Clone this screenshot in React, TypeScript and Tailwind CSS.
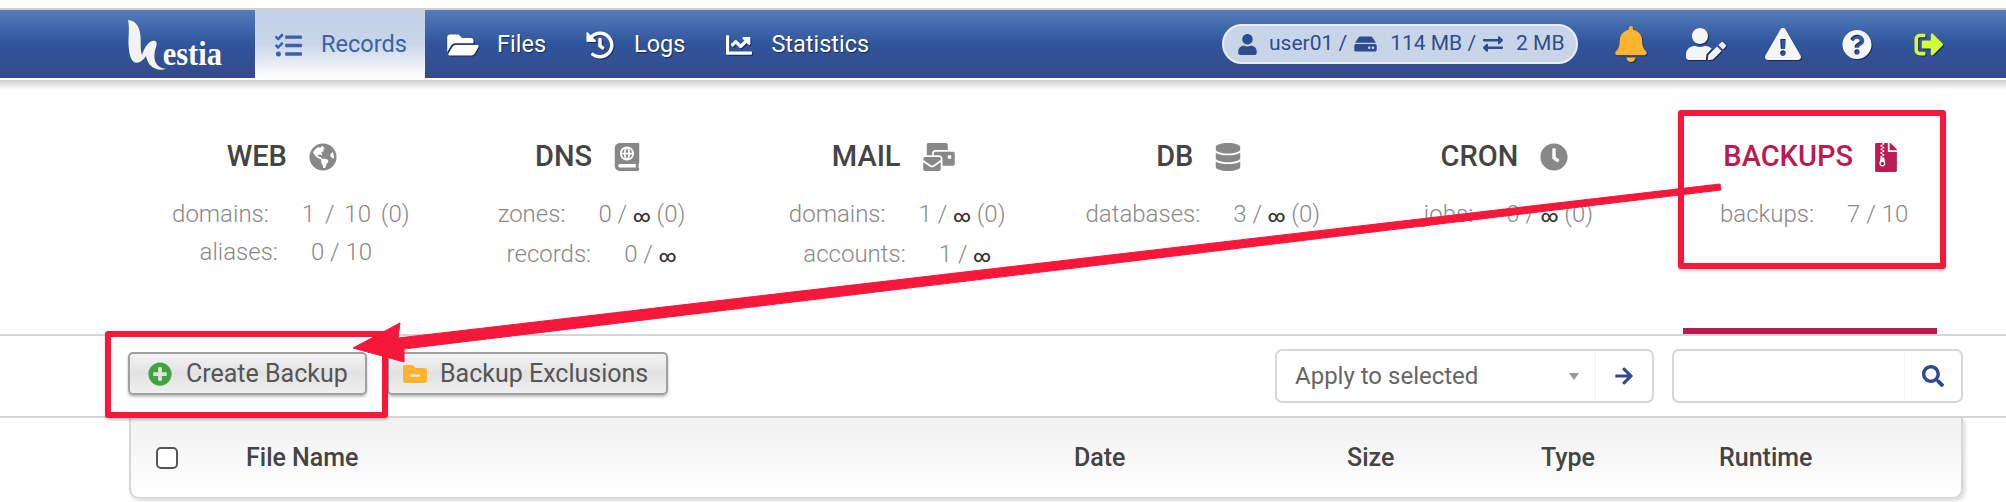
import React from "react";
import {
  FaTasks, FaFolderOpen, FaHistory, FaChartLine, FaUser, FaHdd, FaExchangeAlt, FaBell, FaUserEdit,
  FaExclamationTriangle, FaQuestionCircle, FaSignOutAlt, FaGlobeAmericas, FaAtlas, FaMailBulk,
  FaDatabase, FaClock, FaFileArchive, FaPlusCircle, FaFolderMinus, FaArrowRight, FaSearch,
} from "react-icons/fa";

const Inf = () => <span className="text-[#333] text-[17px] font-medium">∞</span>;

type Row = { label: string; value: React.ReactNode; cls?: string };
const stats: { title: string; icon: React.ReactNode; rows: Row[]; active?: boolean }[] = [
  { title: "WEB", icon: <FaGlobeAmericas className="w-[28px] h-[28px]" />, rows: [
    { label: "domains:", value: <span className="[word-spacing:4px]">1 / 10 (0)</span>, cls: "pl-[18px]" }, { label: "aliases:", value: "0 / 10", cls: "pl-[8px]" } ] },
  { title: "DNS", icon: <FaAtlas className="w-[26px] h-[28px]" />, rows: [
    { label: "zones:", value: <>0 / <Inf /> (0)</>, cls: "pl-[8px]" }, { label: "records:", value: <>0 / <Inf /></>, cls: "pl-[8px]" } ] },
  { title: "MAIL", icon: <FaMailBulk className="w-[32px] h-[28px]" />, rows: [
    { label: "domains:", value: <>1 / <Inf /> (0)</>, cls: "pl-[8px]" }, { label: "accounts:", value: <>1 / <Inf /></>, cls: "pl-[8px]" } ] },
  { title: "DB", icon: <FaDatabase className="w-[26px] h-[28px]" />, rows: [
    { label: "databases:", value: <>3 / <Inf /> (0)</>, cls: "pl-[8px]" } ] },
  { title: "CRON", icon: <FaClock className="w-[28px] h-[28px]" />, rows: [
    { label: "jobs:", value: <>0 / <Inf /> (0)</>, cls: "pl-[8px]" } ] },
  { title: "BACKUPS", icon: <FaFileArchive className="w-[22px] h-[29px]" />, rows: [
    { label: "backups:", value: "7 / 10", cls: "pl-[8px]" } ], active: true },
];

const navIcon = "drop-shadow-[1px_1px_0_rgba(20,30,70,0.8)]";

export default function App() {
  return (
    <div className="relative h-[502px] w-[2006px] overflow-hidden bg-white font-['Roboto',sans-serif]">
      {/* top strip */}
      <div className="h-[8px] bg-white" />
      <div className="h-[2px] bg-[#d0d0d0]" />

      {/* header */}
      <header className="flex h-[68px] items-stretch bg-gradient-to-b from-[#557cb9] via-[#2f559c] to-[#354b8a] pl-[120px] text-[23.5px] text-white">
        <div className="flex w-[135px] items-start">
          <svg width="110" height="68" viewBox="0 0 330 204">
            <path d="M24 30 C50 32 62 55 62 90 C62 110 62 125 66 135 C72 115 85 92 102 92 C110 92 112 100 108 112 C102 130 100 150 112 165 C118 172 128 176 138 176 C125 182 105 180 90 165 C84 158 80 148 78 138 C70 150 62 158 50 158 C36 158 28 140 26 110 C24 80 30 55 24 30 Z" fill="#f2f2f2" />
            <text x="128" y="165" fontFamily="'Liberation Serif', serif" fontWeight="700" fontSize="100" fill="#fff" textLength="178" lengthAdjust="spacingAndGlyphs">estia</text>
          </svg>
        </div>
        <div className="flex w-[170px] items-center gap-[18px] bg-gradient-to-b from-[#c2d0e6] via-[#c9d6e9] to-white pl-[19px] pt-[2px] text-[#3a62a8]">
          <FaTasks className="h-[27px] w-[29px]" />
          <span>Records</span>
        </div>
        <nav className="ml-[21px] flex items-center pt-[2px] [text-shadow:1px_1px_1px_rgba(20,30,70,0.8)]">
          <FaFolderOpen className={`h-[28px] w-[34px] ${navIcon}`} />
          <span className="ml-[17px]">Files</span>
          <FaHistory className={`ml-[40px] h-[28px] w-[28px] ${navIcon}`} />
          <span className="ml-[20px]">Logs</span>
          <FaChartLine className={`ml-[38px] h-[26px] w-[32px] ${navIcon}`} />
          <span className="ml-[16px]">Statistics</span>
        </nav>
        <div className="ml-auto flex items-center pr-[61px]">
          <div className="flex h-[40px] w-[356px] items-center whitespace-nowrap rounded-full border-2 border-[#e8eef7] bg-[#c8d5e9] pl-[14px] text-[21px] text-[#2f4c8e]">
            <FaUser className="h-[21px] w-[19px]" />
            <span className="ml-[12px]">user01 /</span>
            <FaHdd className="ml-[6px] h-[20px] w-[25px]" />
            <span className="ml-[12px]">114 MB /</span>
            <FaExchangeAlt className="ml-[6px] h-[20px] w-[22px]" />
            <span className="ml-[12px]">2 MB</span>
          </div>
          <FaBell className={`ml-[37px] h-[36px] w-[32px] text-[#fdb32f] ${navIcon}`} />
          <FaUserEdit className={`ml-[38px] h-[32px] w-[42px] text-[#f5f5f5] ${navIcon}`} />
          <FaExclamationTriangle className={`ml-[38px] h-[32px] w-[36px] text-[#f5f5f5] ${navIcon}`} />
          <FaQuestionCircle className={`ml-[41px] h-[31px] w-[30px] text-[#f5f5f5] ${navIcon}`} />
          <FaSignOutAlt className={`ml-[41px] h-[29px] w-[32px] text-[#d3fb3a] ${navIcon}`} />
        </div>
      </header>

      {/* stats */}
      <div className="h-[2px] bg-white" />
      <div className="h-[10px] bg-gradient-to-b from-[#cfcfcf] to-white" />
      <section className="ml-[129px] grid h-[244px] w-[1834px] grid-cols-6">
        {stats.map((s) => (
          <div key={s.title} className="flex flex-col items-center pt-[51px]">
            <div className={`flex h-[32px] items-center gap-[22px] text-[29px] font-medium ${s.active ? "text-[#bc1a50]" : "text-[#444]"}`}>
              <span>{s.title}</span>
              <span className={s.active ? "text-[#bc1a50]" : "text-[#888]"}>{s.icon}</span>
            </div>
            <div className="mt-[26px] flex flex-col gap-[8px] whitespace-nowrap text-[24px] font-light leading-[30px] text-[#8a8a8a]">
              {s.rows.map((r) => (
                <div key={r.label} className={`flex justify-center gap-[33px] ${r.cls ?? ""}`}>
                  <span>{r.label}</span>
                  <span>{r.value}</span>
                </div>
              ))}
            </div>
            {s.active && <div className="mt-auto h-[6px] w-[254px] bg-[#bc1a50]" />}
          </div>
        ))}
      </section>

      {/* toolbar */}
      <div className="flex h-[84px] items-center border-y-2 border-[#d6d6d6] pl-[128px] pr-[43px]">
        <button className="mb-[5px] flex h-[43px] w-[239px] items-center gap-[14px] rounded-[5px] border-2 border-[#a0a0a0] bg-gradient-to-b from-[#f3f3f3] via-[#e2e2e2] to-[#f0f0f0] pl-[18px] text-[25px] text-[#555] shadow-[0_2px_3px_rgba(0,0,0,0.25)]">
          <FaPlusCircle className="h-[24px] w-[24px] text-[#3fa53f]" />
          <span>Create Backup</span>
        </button>
        <button className="mb-[5px] ml-[20px] flex h-[43px] w-[281px] items-center gap-[12px] rounded-[5px] border-2 border-[#a0a0a0] bg-gradient-to-b from-[#f3f3f3] via-[#e2e2e2] to-[#f0f0f0] pl-[13px] text-[25px] text-[#555] shadow-[0_2px_3px_rgba(0,0,0,0.25)]">
          <FaFolderMinus className="h-[24px] w-[26px] text-[#fdb32f]" />
          <span>Backup Exclusions</span>
        </button>
        <div className="ml-auto flex h-[54px] w-[379px] items-center rounded-[7px] border-2 border-[#d6d6d6] bg-white text-[24px] text-[#666]">
          <span className="flex-1 pl-[18px]">Apply to selected</span>
          <span className="mr-[16px] h-0 w-0 border-x-[5px] border-t-[7px] border-x-transparent border-t-[#999]" />
          <span className="flex h-full w-[57px] items-center justify-center border-l border-[#f2f2f2] text-[#2c4a8c]">
            <FaArrowRight className="h-[20px] w-[20px]" />
          </span>
        </div>
        <div className="ml-[18px] flex h-[54px] w-[291px] items-center justify-end rounded-[7px] border-2 border-[#d6d6d6] bg-white">
          <span className="flex h-full w-[57px] items-center justify-center border-l border-[#f2f2f2] text-[#2c4a8c]">
            <FaSearch className="h-[22px] w-[22px]" />
          </span>
        </div>
      </div>

      {/* table header */}
      <div className="ml-[129px] flex h-[81px] w-[1834px] items-center rounded-b-[10px] border-x-2 border-b-2 border-[#d8d8d8] bg-gradient-to-b from-[#f1f1f1] to-white pl-[25px] text-[25px] font-medium text-[#444] shadow-[2px_2px_4px_rgba(0,0,0,0.15)]">
        <span className="h-[22px] w-[22px] rounded-[5px] border-2 border-[#555] bg-white" />
        <span className="ml-[68px] w-[828px]">File Name</span>
        <span className="w-[273px]">Date</span>
        <span className="w-[194px]">Size</span>
        <span className="w-[178px]">Type</span>
        <span>Runtime</span>
      </div>

      {/* red annotations */}
      <div className="absolute left-[1678px] top-[110px] h-[159px] w-[268px] rounded-[3px] border-[6px] border-[#f5183a] shadow-[0_2px_3px_rgba(0,0,0,0.2)]" />
      <div className="absolute left-[105px] top-[331px] h-[87px] w-[283px] rounded-[3px] border-[6px] border-[#f5183a] shadow-[0_2px_3px_rgba(0,0,0,0.2)]" />
      <svg className="absolute left-0 top-0" width="2006" height="502">
        <polygon points="1720,184 1721,190 404,349 404,362 353,348 400,323 398,338" fill="#f5183a" stroke="#f5183a" strokeWidth="1" strokeLinejoin="round" />
      </svg>
    </div>
  );
}
